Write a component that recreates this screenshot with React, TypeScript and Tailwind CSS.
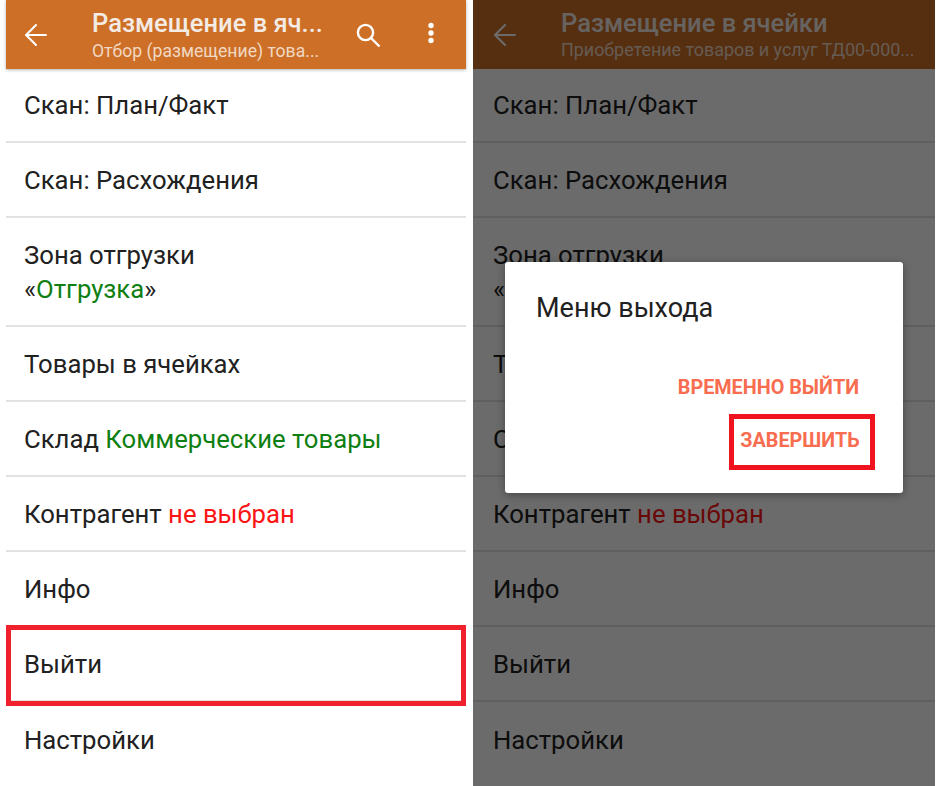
import React from 'react';
import { ArrowLeft } from 'lucide-react';

const rows: { key: string; h: string; content: React.ReactNode }[] = [
  { key: 'plan', h: 'h-[74px]', content: 'Скан: План/Факт' },
  { key: 'diff', h: 'h-[75px]', content: 'Скан: Расхождения' },
  {
    key: 'zone',
    h: 'h-[109px]',
    content: (
      <>
        Зона отгрузки
        <br />
        «<span className="text-[#0f7f12]">Отгрузка</span>»
      </>
    ),
  },
  { key: 'cells', h: 'h-[75px]', content: 'Товары в ячейках' },
  {
    key: 'stock',
    h: 'h-[75px]',
    content: (
      <>
        Склад <span className="text-[#0f7f12]">Коммерческие товары</span>
      </>
    ),
  },
  {
    key: 'partner',
    h: 'h-[75px]',
    content: (
      <>
        Контрагент <span className="text-[#fb1414]">не выбран</span>
      </>
    ),
  },
  { key: 'info', h: 'h-[75px]', content: 'Инфо' },
  { key: 'exit', h: 'h-[75px]', content: 'Выйти' },
  { key: 'settings', h: 'h-[75px]', content: 'Настройки' },
];

const MenuList = ({ highlight, inset }: { highlight?: string; inset: string }) => (
  <div className="flex flex-col">
    {rows.map((row, i) => (
      <div
        key={row.key}
        className={`relative flex items-center text-[25.7px] leading-[34px] text-[#212121] ${inset} ${row.h} ${i < rows.length - 1 ? 'border-b-2 border-[#e2e2e2]' : ''}`}
      >
        <div>{row.content}</div>
        {highlight === row.key && (
          <div className="absolute left-0 right-0 top-[-2px] bottom-[-6px] border-[5px] border-[#f0202c]" />
        )}
      </div>
    ))}
  </div>
);

export default function App() {
  return (
    <div
      className="flex h-[786px] w-[936px] overflow-hidden bg-white"
      style={{ fontFamily: 'Roboto, "Noto Sans", sans-serif' }}
    >
      <div className="ml-[6px] flex w-[460px] flex-col">
        <div className="flex h-[69px] items-center bg-[#cd6f27] text-white shadow-[0_1px_3px_rgba(0,0,0,0.3)]">
          <ArrowLeft className="ml-[13px] h-[34px] w-[34px] shrink-0" strokeWidth={1.5} />
          <div className="ml-[39px] w-[232px] min-w-0">
            <div className="whitespace-nowrap text-[25.5px] font-medium leading-[30px] text-[#f3ebe4]">Размещение в яч...</div>
            <div className="mt-[2px] whitespace-nowrap text-[17.6px] leading-[22px] text-[#f1d8c3]">Отбор (размещение) това...</div>
          </div>
          <svg className="ml-[31px] h-[26px] w-[26px] shrink-0" viewBox="0 0 26 26" fill="none" stroke="currentColor" strokeWidth="2.4">
            <circle cx="10.5" cy="10.5" r="7.6" />
            <path d="M16 16l8.5 8.5" />
          </svg>
          <svg className="ml-[46px] -mt-[3px] h-[24px] w-[8px] shrink-0" viewBox="0 0 8 24" fill="currentColor">
            <circle cx="4" cy="4.5" r="2.7" />
            <circle cx="4" cy="12" r="2.7" />
            <circle cx="4" cy="19.5" r="2.7" />
          </svg>
        </div>
        <MenuList highlight="exit" inset="pl-[18px]" />
      </div>

      <div className="relative ml-[7px] flex w-[462px] flex-col">
        <div className="flex h-[69px] items-center bg-[#cd6f27] text-white">
          <ArrowLeft className="ml-[15px] h-[34px] w-[34px] shrink-0" strokeWidth={1.5} />
          <div className="ml-[39px] min-w-0 flex-1 pr-[18px]">
            <div className="whitespace-nowrap text-[25.5px] font-medium leading-[30px] text-[#f3ebe4]">Размещение в ячейки</div>
            <div className="mt-[1px] whitespace-nowrap text-[17.9px] leading-[22px] text-[#f1d8c3]">Приобретение товаров и услуг ТД00-000...</div>
          </div>
        </div>
        <MenuList inset="pl-[20px]" />
        <div className="absolute inset-0 bg-black/[.58]" />
        <div className="absolute left-[32px] top-[262px] flex h-[231px] w-[398px] flex-col rounded-[3px] bg-white shadow-[0_2px_8px_rgba(0,0,0,0.35)]">
          <div className="ml-[31px] mt-[28px] text-[27px] leading-[36px] text-[#212121]">Меню выхода</div>
          <div className="mr-[44px] mt-[50px] self-end text-[19.8px] font-bold leading-[24px] text-[#f86c4f]">ВРЕМЕННО ВЫЙТИ</div>
          <div className="mr-[28px] mt-[14px] flex h-[56px] w-[146px] items-center justify-center self-end border-[5px] border-[#f0141f] pb-[2px] pr-[4px] text-[19.8px] font-bold text-[#f86c4f]">
            ЗАВЕРШИТЬ
          </div>
        </div>
      </div>
    </div>
  );
}
